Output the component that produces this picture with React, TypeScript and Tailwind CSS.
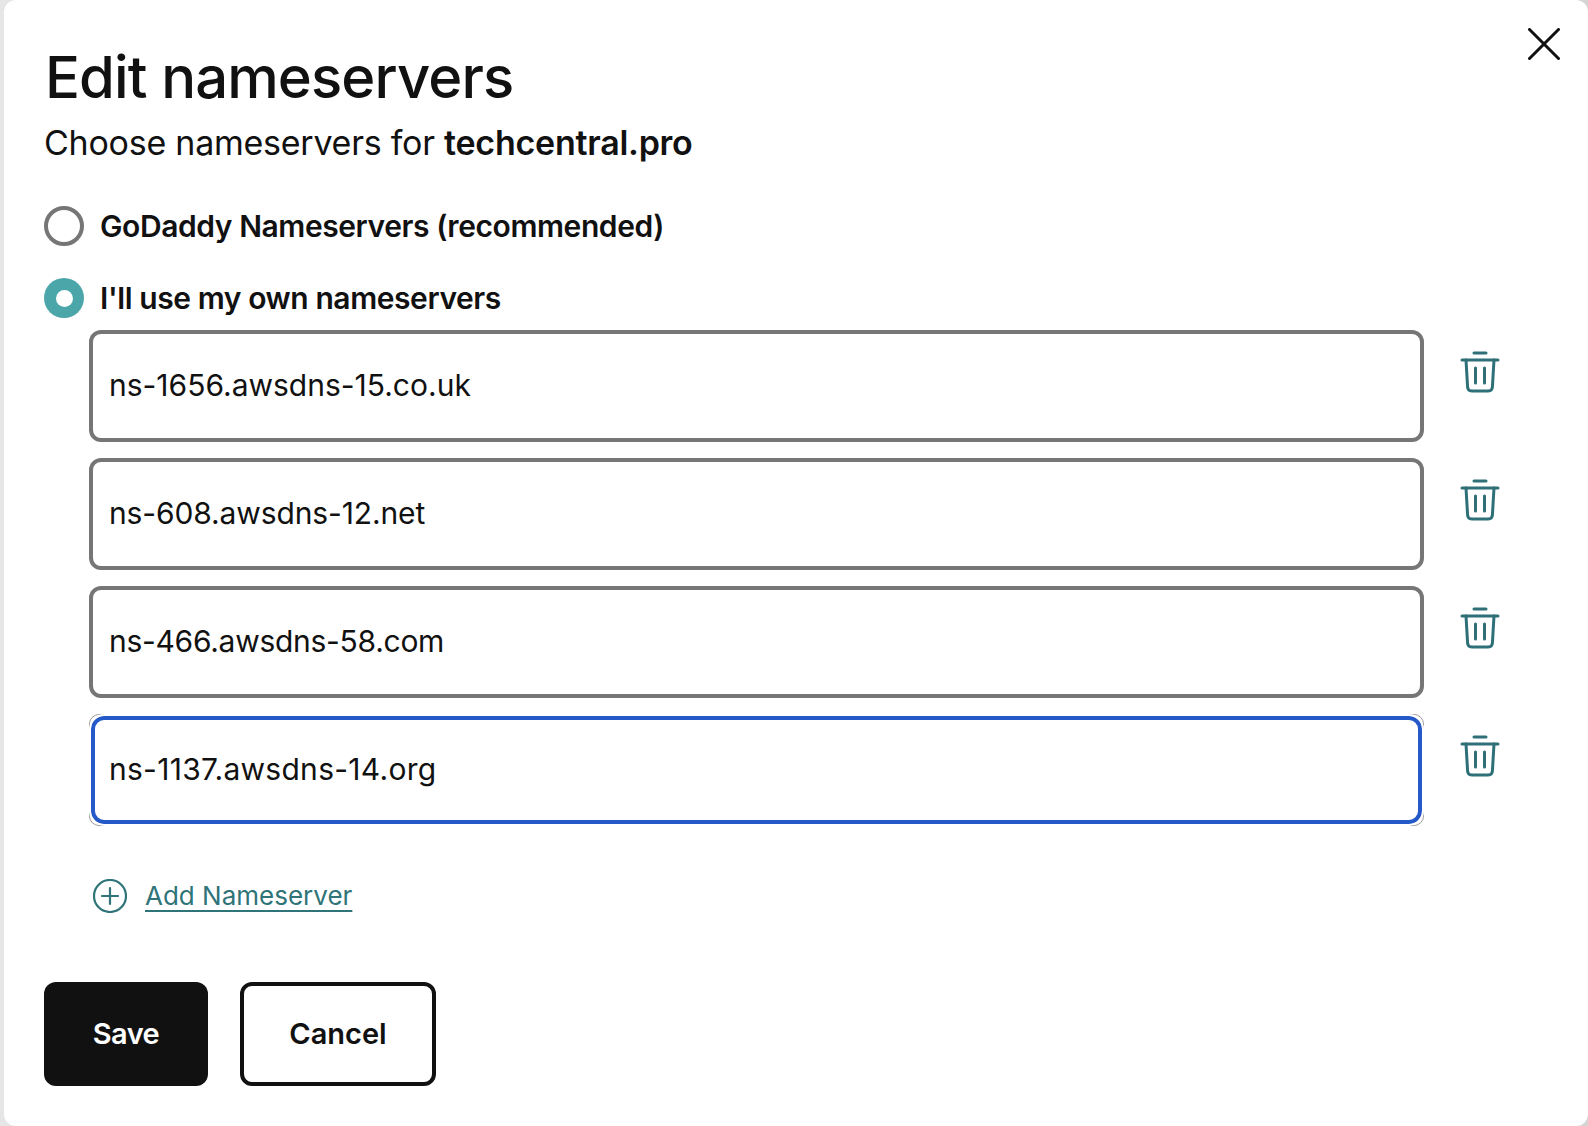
import { useState } from "react";

const servers = [
  { name: "ns-1656.awsdns-15.co.uk", spacing: "tracking-[0px]" },
  { name: "ns-608.awsdns-12.net", spacing: "tracking-[-0.12px]" },
  { name: "ns-466.awsdns-58.com", spacing: "tracking-[-0.28px]" },
  { name: "ns-1137.awsdns-14.org", spacing: "tracking-[0.28px]" },
];

const TrashIcon = () => (
  <svg width="40" height="42" viewBox="0 0 40 42" fill="none" stroke="#2f6f78" strokeWidth="3" strokeLinecap="round" strokeLinejoin="round">
    <path d="M14 2h12" />
    <path d="M2 9h36" />
    <path d="M6 9l1.6 27c.1 2.4 1.6 4 4 4h16.8c2.4 0 3.9-1.6 4-4L34 9" />
    <path d="M15.5 17v15" />
    <path d="M24.5 17v15" />
  </svg>
);

const NameserverRow = ({ value, spacing, focused }: { value: string; spacing: string; focused?: boolean }) => {
  return (
    <div className="flex items-start">
      {focused ? (
        <div className="h-[112px] w-[1335px] rounded-[10px] border border-[#9a9a9a]">
          <input
            readOnly
            value={value}
            className={`-m-px h-[112px] w-[1335px] rounded-[15px] border-2 border-white bg-white pb-[2px] pl-[18px] text-[30px] text-[#111111] shadow-[inset_0_0_0_4px_#2659c8] outline-none ${spacing}`}
          />
        </div>
      ) : (
        <input
          readOnly
          value={value}
          className={`h-[112px] w-[1335px] rounded-[12px] border-4 border-[#767676] bg-white pb-[2px] pl-[16px] text-[30px] text-[#111111] outline-none ${spacing}`}
        />
      )}
      <button className="mt-[21px] ml-[36px]">
        <TrashIcon />
      </button>
    </div>
  );
};

export default function App() {
  const [choice, setChoice] = useState("own");

  return (
    <div className="h-[1126px] overflow-hidden bg-gradient-to-r from-[#e6e6e6] to-[#d4d4d4] pl-[4px] font-['Inter',sans-serif] text-[#111111]">
      <div className="relative h-full rounded-[12px] bg-white pt-[42px] pl-[40px]">
        <button className="absolute top-[28px] right-[28px]">
          <svg width="32" height="32" viewBox="0 0 32 32" stroke="#111111" strokeWidth="3" strokeLinecap="round">
            <path d="M1.5 1.5l29 29M30.5 1.5l-29 29" />
          </svg>
        </button>

        <h1 className="ml-[1px] text-[58px] leading-[70px] font-medium tracking-[-0.9px]">Edit nameservers</h1>
        <p className="mt-[9px] text-[34px] leading-[44px] tracking-[-0.25px]">
          Choose nameservers for <span className="font-semibold">techcentral.pro</span>
        </p>

        <label className="mt-[41px] flex h-[40px] items-center gap-[16px]" onClick={() => setChoice("godaddy")}>
          <span className={choice === "godaddy" ? "flex size-[40px] items-center justify-center rounded-full bg-[#4ba6a9]" : "size-[40px] rounded-full border-4 border-[#767676]"}>
            {choice === "godaddy" && <span className="size-[17px] rounded-full bg-white" />}
          </span>
          <span className="text-[30px] font-semibold tracking-[-0.42px]">GoDaddy Nameservers (recommended)</span>
        </label>

        <label className="mt-[32px] flex h-[40px] items-center gap-[16px]" onClick={() => setChoice("own")}>
          <span className={choice === "own" ? "flex size-[40px] items-center justify-center rounded-full bg-[#4ba6a9]" : "size-[40px] rounded-full border-4 border-[#767676]"}>
            {choice === "own" && <span className="size-[17px] rounded-full bg-white" />}
          </span>
          <span className="text-[30px] font-semibold tracking-[-0.42px]">I'll use my own nameservers</span>
        </label>

        <div className="mt-[12px] ml-[45px] flex flex-col gap-[16px]">
          {servers.map((s, i) => (
            <NameserverRow key={s.name} value={s.name} spacing={s.spacing} focused={i === 3} />
          ))}
        </div>

        <a className="mt-[53px] ml-[49px] flex items-center gap-[18px] text-[26px] leading-[34px] text-[#2f7478]">
          <svg width="34" height="34" viewBox="0 0 34 34" fill="none" stroke="#2f7478" strokeWidth="2.2" strokeLinecap="round">
            <circle cx="17" cy="17" r="16" />
            <path d="M17 9v16M9 17h16" />
          </svg>
          <span className="underline decoration-2 underline-offset-[5px]">Add Nameserver</span>
        </a>

        <div className="mt-[69px] flex gap-[32px]">
          <button className="h-[104px] w-[164px] rounded-[12px] bg-[#111111] text-[29px] font-semibold tracking-[-0.6px] text-white">Save</button>
          <button className="h-[104px] w-[196px] rounded-[12px] border-4 border-[#111111] bg-white text-[29px] font-semibold">Cancel</button>
        </div>
      </div>
    </div>
  );
}
